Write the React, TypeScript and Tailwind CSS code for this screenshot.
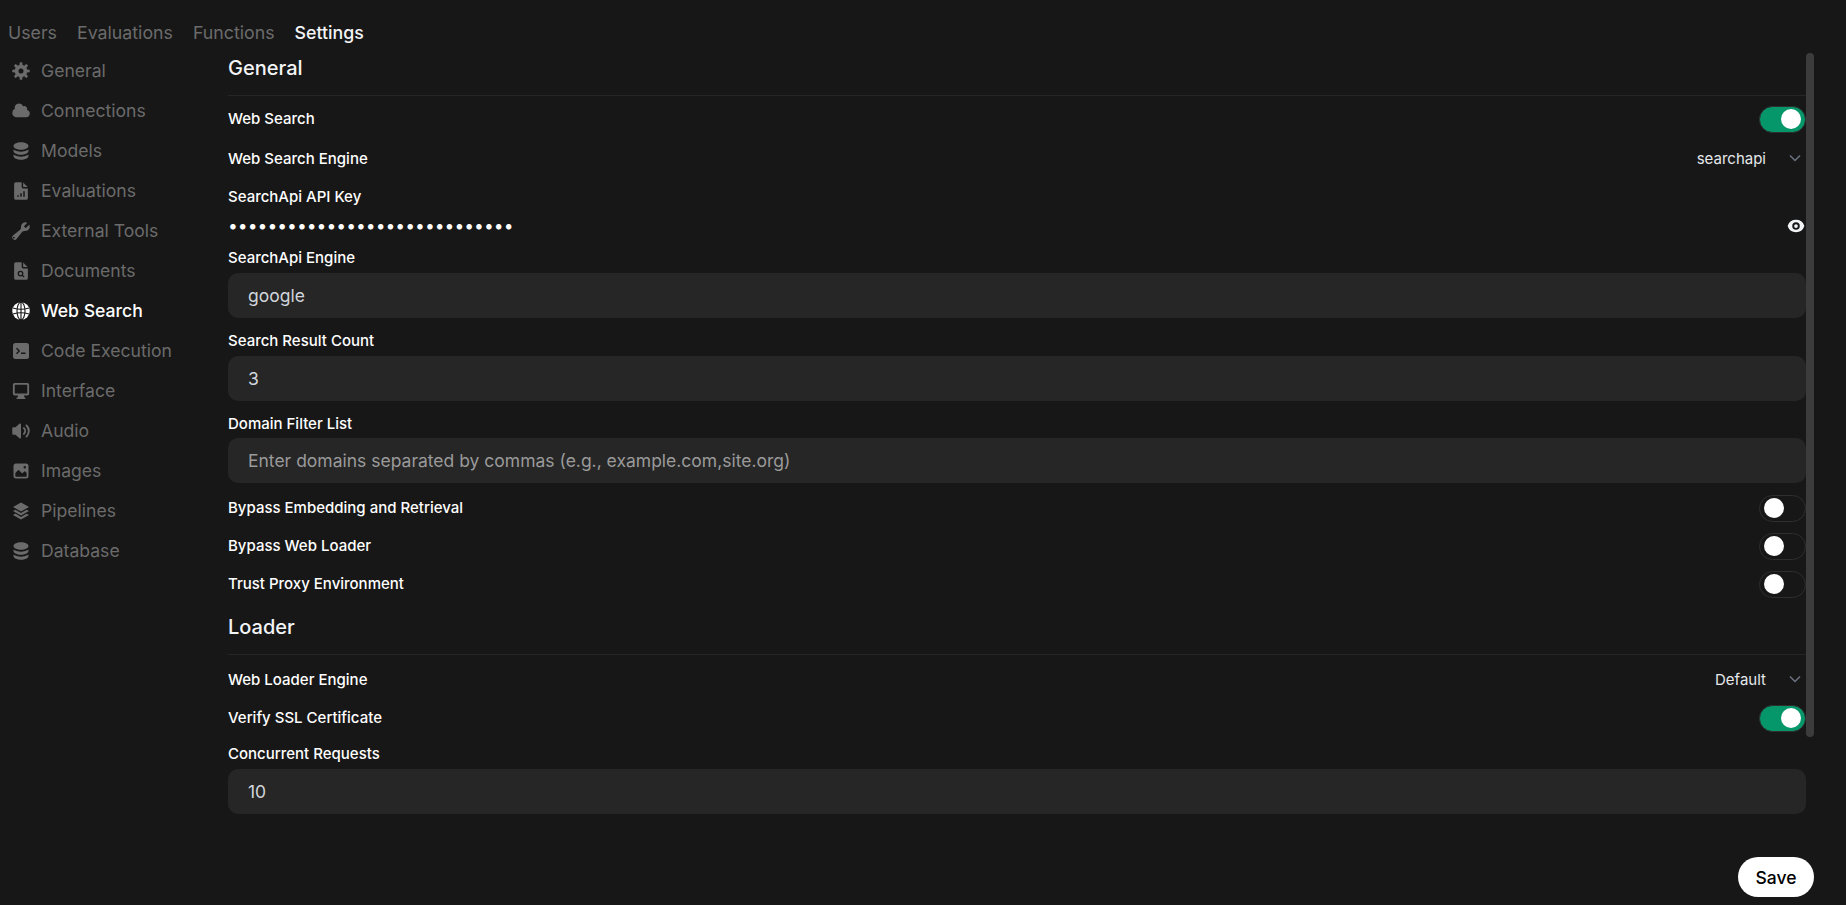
import type { ReactNode } from "react";

const TABS = ["Users", "Evaluations", "Functions", "Settings"];

// 16x16 solid icons, cut-outs are stroked in the page background
const BG = "#171717";
const DOC =
  "M4 1h4.5v3.5A1.5 1.5 0 0 0 10 6h3.5v7.5A1.5 1.5 0 0 1 12 15H4a1.5 1.5 0 0 1-1.5-1.5v-11A1.5 1.5 0 0 1 4 1Z";
const DOC_CORNER = "M9.7 1.2 13.3 4.8H10.2a.5.5 0 0 1-.5-.5Z";
const STACK = (
  <>
    <path d="M8 7c3.314 0 6-1.343 6-3s-2.686-3-6-3-6 1.343-6 3 2.686 3 6 3Z" />
    <path d="M8 8.5c1.84 0 3.579-.37 4.914-1.037A6.33 6.33 0 0 0 14 6.78V8c0 1.657-2.686 3-6 3S2 9.657 2 8V6.78c.346.273.72.5 1.087.683C4.42 8.131 6.16 8.5 8 8.5Z" />
    <path d="M8 12.5c1.84 0 3.579-.37 4.914-1.037.39-.195.758-.425 1.086-.683V12c0 1.657-2.686 3-6 3s-6-1.343-6-3v-1.22c.328.258.696.488 1.087.683C4.42 12.131 6.16 12.5 8 12.5Z" />
  </>
);

const SECTIONS: { name: string; icon: ReactNode }[] = [
  {
    name: "General",
    icon: (
      <path
        fillRule="evenodd"
        d="M6.955 1.45A.5.5 0 0 1 7.452 1h1.096a.5.5 0 0 1 .497.45l.17 1.699c.484.12.94.312 1.356.562l1.321-1.081a.5.5 0 0 1 .67.033l.774.775a.5.5 0 0 1 .034.67l-1.08 1.32c.25.417.44.873.561 1.357l1.699.17a.5.5 0 0 1 .45.497v1.096a.5.5 0 0 1-.45.497l-1.699.17c-.12.484-.312.94-.562 1.356l1.082 1.322a.5.5 0 0 1-.034.67l-.774.774a.5.5 0 0 1-.67.033l-1.322-1.08c-.416.25-.872.44-1.356.561l-.17 1.699a.5.5 0 0 1-.497.45H7.452a.5.5 0 0 1-.497-.45l-.17-1.699a4.973 4.973 0 0 1-1.356-.562L4.108 13.37a.5.5 0 0 1-.67-.033l-.774-.775a.5.5 0 0 1-.034-.67l1.08-1.32a4.971 4.971 0 0 1-.561-1.357l-1.699-.17A.5.5 0 0 1 1 8.548V7.452a.5.5 0 0 1 .45-.497l1.699-.17c.12-.484.312-.94.562-1.356L2.629 4.107a.5.5 0 0 1 .034-.67l.774-.774a.5.5 0 0 1 .67-.033L5.43 3.71a4.97 4.97 0 0 1 1.356-.561l.17-1.699ZM6 8a2 2 0 1 0 4 0 2 2 0 0 0-4 0Z"
      />
    ),
  },
  {
    name: "Connections",
    icon: <path d="M1 9.5A3.5 3.5 0 0 0 4.5 13H12a3 3 0 0 0 .917-5.857 2.503 2.503 0 0 0-3.198-3.019 3.5 3.5 0 0 0-6.628 2.171A3.5 3.5 0 0 0 1 9.5Z" />,
  },
  { name: "Models", icon: STACK },
  {
    name: "Evaluations",
    icon: (
      <>
        <path fillRule="evenodd" d={`${DOC}M9.8 12.5h1.2V8.2H9.8ZM7.4 12.5h1.2V9.8H7.4ZM5 12.5h1.2v-1.2H5Z`} />
        <path d={DOC_CORNER} />
      </>
    ),
  },
  {
    name: "External Tools",
    icon: (
      <path
        fillRule="evenodd"
        d="M11.5 8a3.5 3.5 0 0 0 3.362-4.476c-.094-.325-.497-.39-.736-.15L12.099 5.4a.48.48 0 0 1-.653.033 8.554 8.554 0 0 1-.879-.879.48.48 0 0 1 .033-.653l2.027-2.028c.24-.239.175-.642-.15-.736a3.502 3.502 0 0 0-4.476 3.427c.018.99-.133 2.093-.914 2.7l-5.31 4.13a2.015 2.015 0 1 0 2.828 2.828l4.13-5.309c.607-.78 1.71-.932 2.7-.914L11.5 8ZM3 13.25a.75.75 0 1 1-1.5 0 .75.75 0 0 1 1.5 0Z"
      />
    ),
  },
  {
    name: "Documents",
    icon: (
      <>
        <path d={DOC} />
        <path d={DOC_CORNER} />
        <circle cx="7.6" cy="10" r="1.8" fill="none" stroke={BG} strokeWidth="1" />
        <path d="M9 11.4l1.5 1.5" fill="none" stroke={BG} strokeWidth="1" />
      </>
    ),
  },
  {
    name: "Web Search",
    icon: (
      <>
        <circle cx="8" cy="8" r="7" />
        <g fill="none" stroke={BG} strokeWidth="0.9">
          <path d="M8 1v14" />
          <ellipse cx="8" cy="8" rx="3.2" ry="7" />
          <path d="M1.6 5.6c4 1.2 8.8 1.2 12.8 0M1.6 10.4c4-1.2 8.8-1.2 12.8 0" />
        </g>
      </>
    ),
  },
  {
    name: "Code Execution",
    icon: (
      <>
        <rect x="1.6" y="1.6" width="12.8" height="12.8" rx="2" />
        <path d="M4.4 5.8l2.2 2.2-2.2 2.2M8 9.8h3.6" fill="none" stroke={BG} strokeWidth="1.1" />
      </>
    ),
  },
  {
    name: "Interface",
    icon: (
      <path
        fillRule="evenodd"
        d="M3 1.5h10A1.5 1.5 0 0 1 14.5 3v7a1.5 1.5 0 0 1-1.5 1.5h-2.6l.3 1.6h.4a.6.6 0 0 1 0 1.2H4.9a.6.6 0 0 1 0-1.2h.4l.3-1.6H3A1.5 1.5 0 0 1 1.5 10V3A1.5 1.5 0 0 1 3 1.5ZM3.4 3a.4.4 0 0 0-.4.4v6.2c0 .2.2.4.4.4h9.2a.4.4 0 0 0 .4-.4V3.4a.4.4 0 0 0-.4-.4Z"
      />
    ),
  },
  {
    name: "Audio",
    icon: (
      <>
        <path d="M7.557 2.066A.75.75 0 0 1 8 2.75v10.5a.75.75 0 0 1-1.248.56L3.59 11H2a1 1 0 0 1-1-1V6a1 1 0 0 1 1-1h1.59l3.162-2.81a.75.75 0 0 1 .805-.124ZM12.95 3.05a.75.75 0 1 0-1.06 1.06 5.5 5.5 0 0 1 0 7.78.75.75 0 1 0 1.06 1.06 7 7 0 0 0 0-9.9Z" />
        <path d="M10.828 5.172a.75.75 0 1 0-1.06 1.06 2.5 2.5 0 0 1 0 3.536.75.75 0 1 0 1.06 1.06 4 4 0 0 0 0-5.656Z" />
      </>
    ),
  },
  {
    name: "Images",
    icon: (
      <path
        fillRule="evenodd"
        d="M2 4a2 2 0 0 1 2-2h8a2 2 0 0 1 2 2v8a2 2 0 0 1-2 2H4a2 2 0 0 1-2-2V4Zm10.5 5.707a.5.5 0 0 0-.146-.353l-1-1a.5.5 0 0 0-.708 0L9.354 9.646a.5.5 0 0 1-.708 0L6.354 7.354a.5.5 0 0 0-.708 0l-2 2a.5.5 0 0 0-.146.353V12a.5.5 0 0 0 .5.5h8a.5.5 0 0 0 .5-.5V9.707ZM12 5a1 1 0 1 1-2 0 1 1 0 0 1 2 0Z"
      />
    ),
  },
  {
    name: "Pipelines",
    icon: (
      <>
        <path d="M8 1.2l6.4 3.6L8 8.4 1.6 4.8Z" />
        <path d="M1.6 8l1.9-1.1L8 9.5l4.5-2.6L14.4 8 8 11.6Z" />
        <path d="M1.6 11.2l1.9-1.1L8 12.7l4.5-2.6 1.9 1.1L8 14.8Z" />
      </>
    ),
  },
  { name: "Database", icon: STACK },
];

function Icon({ children, className }: { children: ReactNode; className: string }) {
  return (
    <svg viewBox="0 0 16 16" fill="currentColor" className={className}>
      {children}
    </svg>
  );
}

function Toggle({ on }: { on?: boolean }) {
  return (
    <div
      className={`flex h-[27px] w-[47px] items-center rounded-full border border-[#2e2e2e] px-[4px] ${
        on ? "justify-end bg-[#059669]" : "justify-start bg-transparent"
      }`}
    >
      <div className="h-[20px] w-[20px] rounded-full bg-white" />
    </div>
  );
}

function Title({ text, className }: { text: string; className: string }) {
  return (
    <div className={className}>
      <div className="h-[28px] text-[20px] leading-[28px] font-medium text-[#f3f4f6]">{text}</div>
      <div className="mt-[13px] h-px bg-[#262626]" />
    </div>
  );
}

function Label({ text, className }: { text: string; className: string }) {
  return <div className={`h-[20px] text-[15px] leading-[22px] font-medium text-white ${className}`}>{text}</div>;
}

function ToggleRow({ text, on, className }: { text: string; on?: boolean; className: string }) {
  return (
    <div className={`flex h-[26px] items-center justify-between ${className}`}>
      <span className="pt-[1px] text-[15px] font-medium text-white">{text}</span>
      <Toggle on={on} />
    </div>
  );
}

function SelectRow({ text, value, className }: { text: string; value: string; className: string }) {
  return (
    <div className={`flex h-[24px] items-center justify-between ${className}`}>
      <span className="pt-[2px] text-[15px] font-medium text-white">{text}</span>
      <div className="flex items-center">
        <span className="pt-[2px] text-[15px] text-[#e5e7eb]">{value}</span>
        <svg viewBox="0 0 12 8" className="mr-[5px] ml-[23px] h-[8px] w-[12px] text-[#6b7280]" fill="none" stroke="currentColor" strokeWidth="1.5">
          <path d="M1 1.5l5 5 5-5" />
        </svg>
      </div>
    </div>
  );
}

function Field({ value, placeholder, className = "" }: { value?: string; placeholder?: boolean; className?: string }) {
  return (
    <div
      className={`mt-[6px] flex h-[45px] items-center rounded-[10px] bg-[#262626] px-[20px] pt-[2px] text-[17.5px] ${
        placeholder ? "text-[#9a9a9a]" : "text-[#d1d5db]"
      } ${className}`}
    >
      {value}
    </div>
  );
}

export default function App() {
  return (
    <div className="flex h-screen w-full flex-col overflow-hidden bg-[#171717] font-['Inter',sans-serif]">
      <nav className="flex h-[50px] shrink-0 gap-[20px] pt-[21px] pl-[8px] text-[17.75px] leading-[24px]">
        {TABS.map((t) => (
          <span key={t} className={t === "Settings" ? "font-medium text-[#f3f4f6]" : "text-[#6b6b6b]"}>
            {t}
          </span>
        ))}
      </nav>

      <div className="flex min-h-0 flex-1">
        <aside className="w-[228px] shrink-0 pt-[1px] pl-[11px]">
          {SECTIONS.map(({ name, icon }) => (
            <div
              key={name}
              className={`flex h-[40px] items-center gap-[10px] text-[17.6px] ${
                name === "Web Search" ? "font-medium text-white" : "text-[#6b6b6b]"
              }`}
            >
              <Icon className="h-[20px] w-[20px] shrink-0">{icon}</Icon>
              {name}
            </div>
          ))}
        </aside>

        <div className="relative flex min-w-0 flex-1 flex-col pr-[32px]">
          <main className="min-h-0 flex-1 overflow-hidden pr-[8px]">
            <Title text="General" className="mt-[4px]" />
            <ToggleRow text="Web Search" on className="mt-[10px]" />
            <SelectRow text="Web Search Engine" value="searchapi" className="mt-[14px]" />
            <Label text="SearchApi API Key" className="mt-[16px]" />
            <div className="mt-[10px] flex h-[20px] items-center justify-between">
              <span className="text-[17.5px] text-white">{"•".repeat(29)}</span>
              <Icon className="h-[20px] w-[20px] text-[#f3f4f6]">
                <path d="M8 9.5a1.5 1.5 0 1 0 0-3 1.5 1.5 0 0 0 0 3Z" />
                <path
                  fillRule="evenodd"
                  d="M1.38 8.28a.87.87 0 0 1 0-.566 7.003 7.003 0 0 1 13.238.006.87.87 0 0 1 0 .566A7.003 7.003 0 0 1 1.379 8.28ZM11 8a3 3 0 1 1-6 0 3 3 0 0 1 6 0Z"
                />
              </Icon>
            </div>
            <Label text="SearchApi Engine" className="mt-[11px]" />
            <Field value="google" />
            <Label text="Search Result Count" className="mt-[12px]" />
            <Field value="3" />
            <Label text="Domain Filter List" className="mt-[12px]" />
            <Field value="Enter domains separated by commas (e.g., example.com,site.org)" placeholder className="!mt-[5px]" />
            <ToggleRow text="Bypass Embedding and Retrieval" className="mt-[12px]" />
            <ToggleRow text="Bypass Web Loader" className="mt-[12px]" />
            <ToggleRow text="Trust Proxy Environment" className="mt-[12px]" />
            <Title text="Loader" className="mt-[16px]" />
            <SelectRow text="Web Loader Engine" value="Default" className="mt-[12px]" />
            <ToggleRow text="Verify SSL Certificate" on className="mt-[14px]" />
            <Label text="Concurrent Requests" className="mt-[12px]" />
            <Field value="10" />
          </main>

          <footer className="flex h-[48px] shrink-0 justify-end">
            <button className="h-[40px] w-[76px] rounded-full bg-white pt-[2px] text-[17.5px] font-medium text-black">Save</button>
          </footer>

          {/* overlay scrollbar thumb */}
          <div className="absolute top-[3px] right-[32px] h-[684px] w-[8px] rounded-full bg-[#3c3c3c]" />
        </div>
      </div>
    </div>
  );
}
